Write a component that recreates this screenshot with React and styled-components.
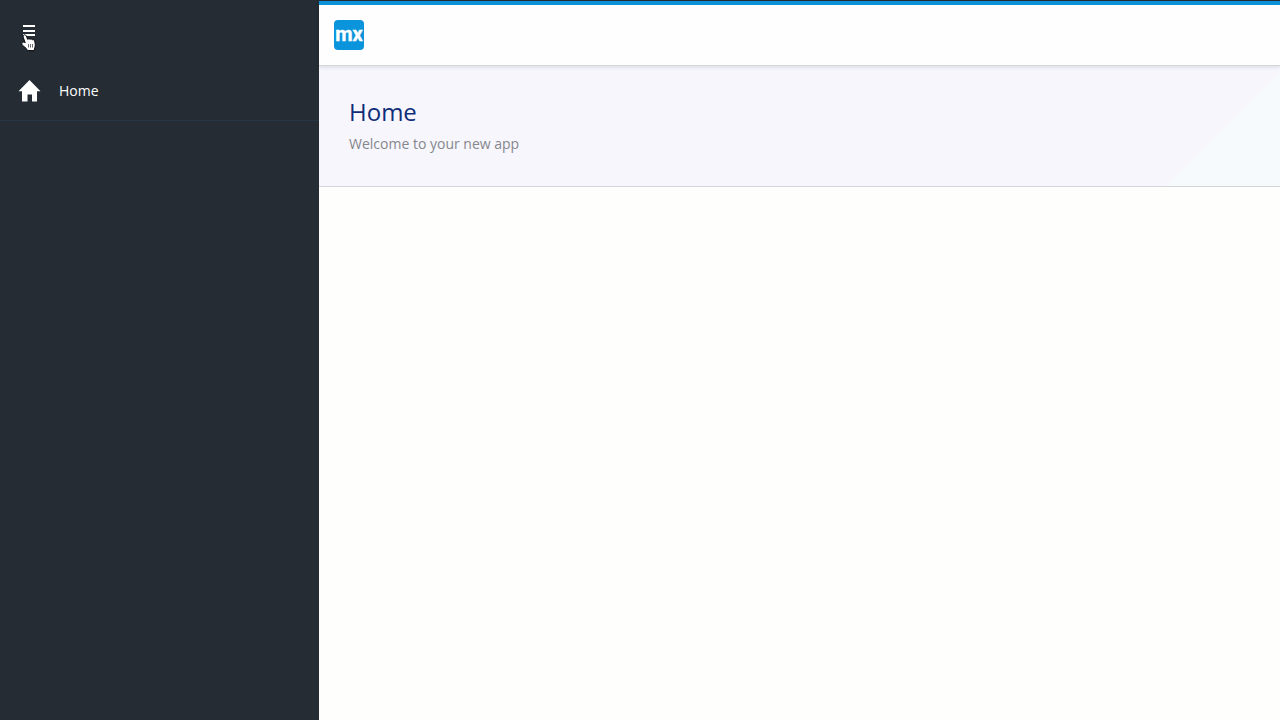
import React from "react";
import styled, { createGlobalStyle } from "styled-components";

const GlobalStyle = createGlobalStyle`
  *, *::before, *::after { box-sizing: border-box; }
  body {
    margin: 0;
    background: #fefefd;
    font-family: "Open Sans", "Noto Sans", sans-serif;
    font-size: 14px;
  }
`;

const Layout = styled.div`
  display: grid;
  grid-template-columns: 319px minmax(0, 1fr);
  min-height: 100vh;
`;

const Sidebar = styled.aside`
  background: #252c33;
  color: #fff;
`;

const SidebarHeader = styled.div`
  display: flex;
  align-items: center;
  height: 60px;
  padding: 2px 14px 0;
`;

const ToggleButton = styled.button`
  position: relative;
  display: flex;
  align-items: center;
  justify-content: center;
  width: 30px;
  height: 30px;
  padding: 0;
  border: 0;
  background: transparent;
  color: inherit;
  cursor: pointer;
`;

const Pointer = styled.svg`
  position: absolute;
  left: 7px;
  top: 18px;
`;

const NavLink = styled.a`
  display: flex;
  align-items: center;
  gap: 18px;
  height: 61px;
  padding: 2px 18px 0;
  border-bottom: 1px solid #263544;
  color: #fff;
  line-height: 20px;
  text-decoration: none;
`;

const Content = styled.div`
  min-width: 0;
  border-top: 1px solid #252c33;
`;

const Topbar = styled.header`
  position: relative;
  display: flex;
  align-items: center;
  height: 65px;
  padding: 0 15px;
  border-top: 4px solid #0a91d6;
  border-bottom: 1px solid #d5d5da;
  background: #fefefe;
  box-shadow: 0 1px 4px rgba(20, 30, 50, 0.14);
`;

const LogoLink = styled.a`
  display: flex;
`;

const Hero = styled.section`
  padding: 30px;
  min-height: 121px;
  border-bottom: 1px solid #d5d5da;
  background: linear-gradient(135deg, #f6f6fc 0 calc(100% - 80px), #f6fafd calc(100% - 80px));
`;

const Title = styled.h1`
  margin: 0 0 6px;
  color: #0f2d78;
  font-size: 24px;
  font-weight: 400;
  line-height: 32px;
`;

const Subtitle = styled.p`
  margin: 0;
  color: #85878c;
  line-height: 20px;
`;

function MenuIcon() {
  return (
    <svg width="12" height="12" viewBox="0 0 12 12" fill="#fff" shapeRendering="crispEdges" aria-hidden="true">
      <path d="M0 0h12v2H0zM0 5h12v2H0zM0 9h12v2H0z" />
    </svg>
  );
}

function HandPointer() {
  return (
    <Pointer width="16" height="19" viewBox="0 0 16 19" aria-hidden="true">
      <path
        d="M2.2 1.8C2.4 .4 4.6 .4 5.4 2L6.7 5.4C7.3 4.6 8.4 4.6 9 5.4C9.8 4.7 10.9 4.9 11.4 5.8C12.4 5.4 13.3 5.9 13.6 6.9C14.2 8.9 14.6 11.6 13.9 13.4L13.2 16.6H6.6L5.2 14.4L1.2 11C.2 9.9 .9 8.1 2.4 8.1C3.1 8.1 3.6 8.4 4.2 8.8L2.4 3.8C2.2 3.2 2.1 2.4 2.2 1.8Z"
        fill="#fff"
        stroke="#05080c"
        strokeWidth="1"
        strokeLinejoin="round"
      />
      <path d="M7.5 10v3.5M9.5 10v3.5M11.5 10v3.5" stroke="#05080c" strokeWidth=".6" />
    </Pointer>
  );
}

function HomeIcon() {
  return (
    <svg width="23" height="22" viewBox="0 0 23 22" fill="#fff" aria-hidden="true">
      <path d="M11.5 0L22.5 11.3H19V21.5H14V14.5H9.5V21.5H4V11.3H.5Z" />
    </svg>
  );
}

function Logo() {
  return (
    <svg width="30" height="30" viewBox="0 0 30 30" role="img" aria-label="mx">
      <rect width="30" height="30" rx="4" fill="#0a94dc" />
      <text
        x="15"
        y="21"
        textAnchor="middle"
        fill="#fff"
        stroke="#fff"
        strokeWidth=".4"
        fontFamily="Roboto, sans-serif"
        fontSize="20"
        fontWeight="700"
      >
        mx
      </text>
    </svg>
  );
}

export default function App() {
  return (
    <>
      <GlobalStyle />
      <Layout>
        <Sidebar>
          <SidebarHeader>
            <ToggleButton type="button" aria-label="Toggle menu">
              <MenuIcon />
              <HandPointer />
            </ToggleButton>
          </SidebarHeader>
          <nav>
            <NavLink href="#home">
              <HomeIcon />
              <span>Home</span>
            </NavLink>
          </nav>
        </Sidebar>
        <Content>
          <Topbar>
            <LogoLink href="#home"><Logo /></LogoLink>
          </Topbar>
          <main>
            <Hero>
              <Title>Home</Title>
              <Subtitle>Welcome to your new app</Subtitle>
            </Hero>
          </main>
        </Content>
      </Layout>
    </>
  );
}
